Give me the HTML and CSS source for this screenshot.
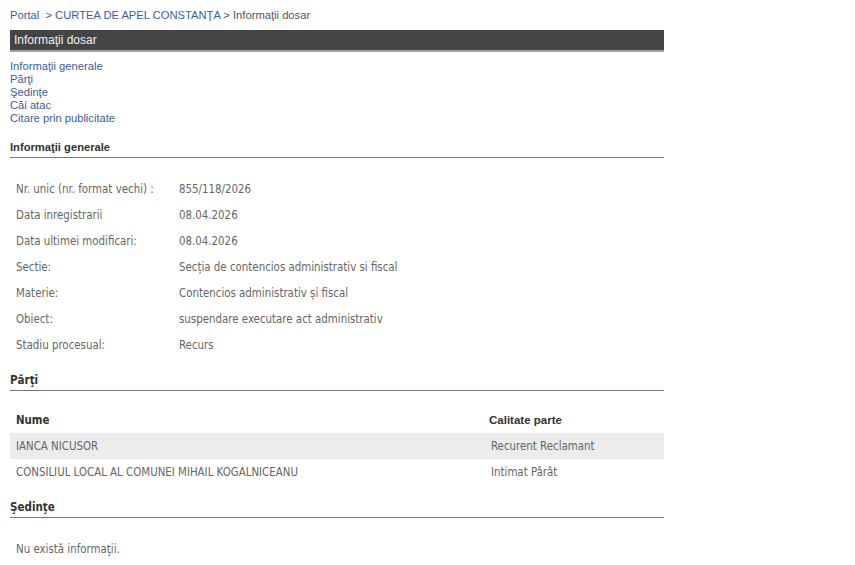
FILE: index.html
```html
<!DOCTYPE html>
<html lang="ro">
<head>
<meta charset="utf-8">
<title>Informaţii dosar</title>
<link rel="stylesheet" href="styles.css">
</head>
<body>
<div class="page">
  <div class="crumbs"><a href="#">Portal</a>&nbsp; &gt; <a href="#">CURTEA DE APEL CONSTANŢA</a> &gt; Informaţii dosar</div>
  <div class="titlebar">Informaţii dosar</div>
  <ul class="toc">
    <li><a href="#">Informaţii generale</a></li>
    <li><a href="#">Părţi</a></li>
    <li><a href="#">Şedinţe</a></li>
    <li><a href="#">Căi atac</a></li>
    <li><a href="#">Citare prin publicitate</a></li>
  </ul>

  <h2 class="section arial">Informaţii generale</h2>
  <table class="info">
    <tr><td class="lbl">Nr. unic (nr. format vechi) :</td><td>855/118/2026</td></tr>
    <tr><td class="lbl">Data inregistrarii</td><td>08.04.2026</td></tr>
    <tr><td class="lbl">Data ultimei modificari:</td><td>08.04.2026</td></tr>
    <tr><td class="lbl">Sectie:</td><td>Secția de contencios administrativ si fiscal</td></tr>
    <tr><td class="lbl">Materie:</td><td>Contencios administrativ și fiscal</td></tr>
    <tr><td class="lbl">Obiect:</td><td>suspendare executare act administrativ</td></tr>
    <tr><td class="lbl">Stadiu procesual:</td><td>Recurs</td></tr>
  </table>

  <h2 class="section">Părţi</h2>
  <table class="parti">
    <tr class="head"><th class="nume">Nume</th><th class="calit">Calitate parte</th></tr>
    <tr class="alt"><td>IANCA NICUSOR</td><td class="c2">Recurent Reclamant</td></tr>
    <tr><td>CONSILIUL LOCAL AL COMUNEI MIHAIL KOGALNICEANU</td><td class="c2">Intimat Pârât</td></tr>
  </table>

  <h2 class="section">Şedinţe</h2>
  <p class="none">Nu există informaţii.</p>
</div>
</body>
</html>
```

FILE: styles.css
```css
html, body {
  margin: 0;
  padding: 0;
  background: #ffffff;
}
.page {
  width: 654px;
  padding: 8px 0 0 10px;
  font-family: "DejaVu Sans Condensed", "DejaVu Sans", Tahoma, sans-serif;
  font-size: 11.4px;
  color: #666666;
}
a {
  color: #3b5e98;
  text-decoration: none;
}
.crumbs {
  font-family: "Liberation Sans", Arial, sans-serif;
  font-size: 11.2px;
  color: #555555;
  line-height: 15px;
  height: 22px;
}
.titlebar {
  background: #444444;
  color: #f0f0f0;
  font-family: "Liberation Sans", Arial, sans-serif;
  font-size: 12px;
  line-height: 20px;
  height: 20px;
  padding-left: 4px;
  border-bottom: 2px solid #a0a0a0;
}
.toc {
  list-style: none;
  margin: 8px 0 0 0;
  padding: 0;
  font-family: "Liberation Sans", Arial, sans-serif;
  font-size: 11.2px;
  line-height: 13px;
}
.section {
  margin: 0;
  font-family: "DejaVu Sans Condensed", "DejaVu Sans", Tahoma, sans-serif;
  font-size: 11.5px;
  font-weight: bold;
  color: #333333;
  line-height: 14px;
  padding-bottom: 3px;
  border-bottom: 1px solid #777777;
}
.section.arial {
  font-family: "Liberation Sans", Arial, sans-serif;
  font-size: 11.2px;
  margin-top: 15px;
}
.info {
  border-collapse: collapse;
  margin-top: 18px;
  margin-bottom: 15px;
}
.info td {
  height: 26px;
  padding: 0 0 0 6px;
  vertical-align: middle;
}
.info td.lbl {
  width: 157px;
}
.parti {
  width: 654px;
  border-collapse: collapse;
  margin-top: 15px;
  margin-bottom: 15px;
}
.parti th {
  text-align: left;
  color: #333333;
  font-weight: bold;
  height: 27px;
  padding: 0 0 0 6px;
}
.parti th.calit {
  font-family: "Liberation Sans", Arial, sans-serif;
  font-size: 11.5px;
  width: 175px;
}
.parti td {
  height: 26px;
  padding: 0 0 0 6px;
}
.parti td.c2 {
  padding-left: 8px;
}
.parti tr.alt {
  background: #ececec;
}
.none {
  margin: 24px 0 0 6px;
}
```
